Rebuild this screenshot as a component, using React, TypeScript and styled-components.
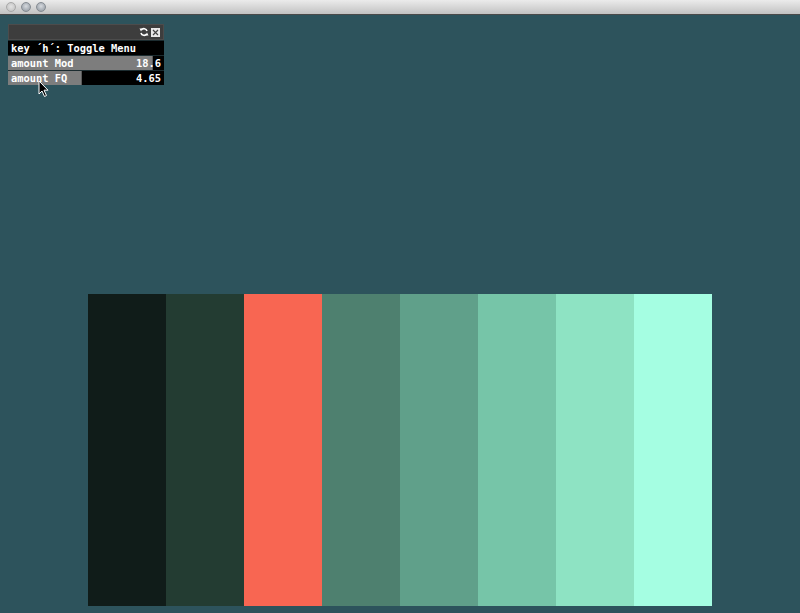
import React from 'react';
import styled, { createGlobalStyle } from 'styled-components';

const GlobalStyle = createGlobalStyle`
  html, body {
    margin: 0;
    padding: 0;
    background: #2d535c;
  }
  #root {
    width: 800px;
    height: 613px;
    overflow: hidden;
  }
`;

const Window = styled.div`
  width: 800px;
  height: 613px;
  display: flex;
  flex-direction: column;
  background: #2d535c;
`;

const TitleBar = styled.div`
  height: 14px;
  flex: 0 0 14px;
  display: flex;
  align-items: center;
  gap: 5px;
  padding-left: 6px;
  background: linear-gradient(#ebebeb, #c2c2c2);
  border-bottom: 1px solid #4a4a4a;
`;

const Light = styled.span<{ $dim?: boolean }>`
  width: 10px;
  height: 10px;
  border-radius: 50%;
  box-sizing: border-box;
  border: 1px solid ${(p) => (p.$dim ? '#a8a8a8' : '#858b92')};
  background: ${(p) =>
    p.$dim
      ? 'radial-gradient(circle at 50% 45%, #e2e2e2 0%, #d4d4d4 40%, #bdbdbd 100%)'
      : 'radial-gradient(circle at 50% 40%, #d6dadf 0%, #aab0b7 60%, #8f959c 100%)'};
`;

const Canvas = styled.div`
  flex: 1;
  display: flex;
  flex-direction: column;
  position: relative;
`;

const Panel = styled.div`
  margin: 9px 0 0 8px;
  width: 156px;
  display: flex;
  flex-direction: column;
  gap: 1px;
  background: #1c2c30;
  font-family: "DejaVu Sans Mono", "Liberation Mono", monospace;
  font-size: 10.4px;
  font-weight: bold;
  color: #ffffff;
`;

const Header = styled.div`
  height: 16px;
  display: flex;
  align-items: center;
  justify-content: flex-end;
  gap: 2px;
  padding-right: 3px;
  background: #3d3d3d;
  border: 1px solid #4c4c4c;
  box-sizing: border-box;
`;

const Row = styled.div`
  position: relative;
  height: 14px;
  display: flex;
  align-items: center;
  justify-content: space-between;
  padding: 0 3px;
  background: #000000;
  overflow: hidden;
`;

const Fill = styled.div`
  position: absolute;
  left: 0;
  top: 0;
  bottom: 0;
  background: #7d7d7d;
  border-right: 1px solid #5a5a5a;
`;

const Label = styled.span`
  position: relative;
  white-space: pre;
  line-height: 14px;
`;

const Palette = styled.div`
  margin: 209px auto 0;
  width: 624px;
  height: 312px;
  display: flex;
`;

const Swatch = styled.div<{ $c: string }>`
  flex: 1;
  background: ${(p) => p.$c};
`;

const Cursor = styled.svg`
  position: absolute;
  left: 38px;
  top: 65px;
`;

const colors = ['#101c19', '#233c32', '#f86652', '#4e806f', '#60a08a', '#76c5a8', '#8ee3c3', '#a5fee2'];

const sliders = [
  { name: 'amount Mod', value: '18.6', ratio: 0.925 },
  { name: 'amount FQ', value: '4.65', ratio: 0.465 },
];

const App: React.FC = () => (
  <Window>
    <GlobalStyle />
    <TitleBar>
      <Light $dim />
      <Light />
      <Light />
    </TitleBar>
    <Canvas>
      <Panel>
        <Header>
          <svg width="10" height="10" viewBox="0 0 10 10">
            <path d="M8 4A3.2 3.2 0 0 0 2.3 3" fill="none" stroke="#fff" strokeWidth="1.6" />
            <path d="M2 6A3.2 3.2 0 0 0 7.7 7" fill="none" stroke="#fff" strokeWidth="1.6" />
            <path d="M0.5 1.5L3.5 1.5L2 4.5Z M9.5 8.5L6.5 8.5L8 5.5Z" fill="#fff" />
          </svg>
          <svg width="9" height="9" viewBox="0 0 9 9">
            <rect x="0" y="0" width="9" height="9" fill="#e8e8e8" />
            <path d="M2 2L7 7M7 2L2 7" stroke="#444" strokeWidth="1.2" />
          </svg>
        </Header>
        <Row>
          <Label>key ´h´: Toggle Menu</Label>
        </Row>
        {sliders.map((s) => (
          <Row key={s.name}>
            <Fill style={{ width: `${s.ratio * 100}%` }} />
            <Label>{s.name}</Label>
            <Label>{s.value}</Label>
          </Row>
        ))}
      </Panel>
      <Cursor width="12" height="18" viewBox="0 0 12 18">
        <path d="M1 1L1 14L4 11L6.5 16.5L8.5 15.5L6 10.2L10 10.2Z" fill="#000" stroke="#fff" strokeWidth="1" />
      </Cursor>
      <Palette>
        {colors.map((c) => (
          <Swatch key={c} $c={c} />
        ))}
      </Palette>
    </Canvas>
  </Window>
);

export default App;
